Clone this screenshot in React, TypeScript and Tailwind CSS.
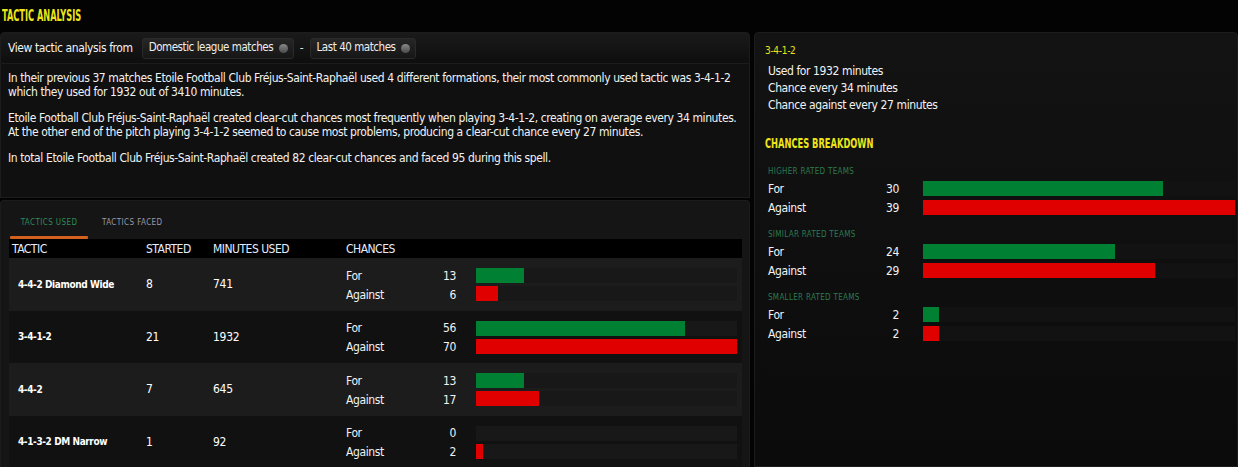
type Chance = { for: number; against: number };

type TacticRow = {
	name: string;
	started: number;
	minutes: number;
	chances: Chance;
};

const tactics: TacticRow[] = [
	{ name: "4-4-2 Diamond Wide", started: 8, minutes: 741, chances: { for: 13, against: 6 } },
	{ name: "3-4-1-2", started: 21, minutes: 1932, chances: { for: 56, against: 70 } },
	{ name: "4-4-2", started: 7, minutes: 645, chances: { for: 13, against: 17 } },
	{ name: "4-1-3-2 DM Narrow", started: 1, minutes: 92, chances: { for: 0, against: 2 } },
];

const breakdown = [
	{ label: "Higher rated teams", chances: { for: 30, against: 39 } },
	{ label: "Similar rated teams", chances: { for: 24, against: 29 } },
	{ label: "Smaller rated teams", chances: { for: 2, against: 2 } },
];

const TABLE_MAX = 70;
const TABLE_BAR = 261;
const SIDE_MAX = 39;
const SIDE_BAR = 312;

const Bar = ({ value, max, width, color, track }: { value: number; max: number; width: number; color: string; track: string }) => (
	<div className={`h-[15px] ${track}`} style={{ width }}>
		<div className={`h-full ${color}`} style={{ width: Math.round((value / max) * width) }} />
	</div>
);

const Dropdown = ({ label, width }: { label: string; width: number }) => (
	<div
		className="flex h-[21px] items-center justify-between rounded-[3px] border border-[#2a2a2a] bg-gradient-to-b from-[#262626] to-[#161616] pr-[5px] pl-[6px] text-[11.5px] tracking-[-0.45px] whitespace-nowrap text-[#eeeeee]"
		style={{ width }}
	>
		<span>{label}</span>
		<span className="h-[9px] w-[9px] rounded-full bg-gradient-to-b from-[#8a8a8a] to-[#4a4a4a]" />
	</div>
);

const ChanceLines = ({ chances }: { chances: Chance }) => (
	<div className="flex flex-col gap-[3px]">
		{(["for", "against"] as const).map((k) => (
			<div key={k} className="flex h-[15px] items-center text-[12px] tracking-[-0.4px] text-[#f2f2f2]">
				<span className={`w-[80px] ${k === "for" ? "" : "translate-y-[1px]"}`}>{k === "for" ? "For" : "Against"}</span>
				<span className={`w-[30px] text-right ${k === "for" ? "" : "translate-y-[1px]"}`}>{chances[k]}</span>
				<span className="w-[20px]" />
				<Bar
					value={chances[k]}
					max={TABLE_MAX}
					width={TABLE_BAR}
					track="bg-[#181818]"
					color={k === "for" ? "bg-[#008033]" : "bg-[#e00000]"}
				/>
			</div>
		))}
	</div>
);

export default function App() {
	return (
		<div className="h-[467px] w-[1238px] overflow-hidden bg-[#030303] font-['DejaVu_Sans_Condensed','DejaVu_Sans',sans-serif] text-white">
			<div className="flex h-[32px] items-center pl-[2px]">
				<span className="inline-block origin-left scale-x-[0.61] text-[15px] font-bold whitespace-nowrap text-[#ece51a] uppercase">
					Tactic Analysis
				</span>
			</div>
			<div className="flex gap-[4px]">
				{/* left column */}
				<div className="flex w-[750px] flex-col">
					<div className="flex h-[32px] items-center gap-[6px] rounded-t-[4px] border border-[#1c1c1c] bg-gradient-to-b from-[#1a1a1a] to-[#0e0e0e] pl-[7px]">
						<span className="mr-[3px] text-[12px] tracking-[-0.4px] whitespace-nowrap text-[#f2f2f2]">View tactic analysis from</span>
						<Dropdown label="Domestic league matches" width={152} />
						<span className="text-[12px] text-[#dddddd]">-</span>
						<Dropdown label="Last 40 matches" width={106} />
					</div>
					<div className="h-[134px] border-x border-b border-[#1c1c1c] bg-[#101010] px-[7px] pt-[8px] text-[12px] leading-[13.5px] tracking-[-0.4px] whitespace-nowrap text-[#f2f2f2]">
						<p>
							In their previous 37 matches Etoile Football Club Fréjus-Saint-Raphaël used 4 different formations, their most commonly used tactic was 3-4-1-2
							<br />
							which they used for 1932 out of 3410 minutes.
						</p>
						<p className="mt-[13px]">
							Etoile Football Club Fréjus-Saint-Raphaël created clear-cut chances most frequently when playing 3-4-1-2, creating on average every 34 minutes.
							<br />
							At the other end of the pitch playing 3-4-1-2 seemed to cause most problems, producing a clear-cut chance every 27 minutes.
						</p>
						<p className="mt-[13px]">
							In total Etoile Football Club Fréjus-Saint-Raphaël created 82 clear-cut chances and faced 95 during this spell.
						</p>
					</div>
					<div className="mt-[2px] h-[268px] rounded-t-[4px] border-x border-t border-[#1c1c1c] bg-[#151515] pl-[8px] pr-[7px]">
						<div className="flex h-[38px] items-end">
							<div className="flex w-[80px] flex-col items-center">
								<span className="pb-[7px] text-[8px] tracking-[0.4px] text-[#2f8a5c] uppercase">Tactics used</span>
								<span className="h-[3px] w-[78px] rounded-[1px] bg-[#d2601e]" />
							</div>
							<span className="ml-[13px] pb-[10px] text-[8px] tracking-[0.4px] text-[#9a9aa8] uppercase">Tactics faced</span>
						</div>
						<div className="grid h-[19px] grid-cols-[137px_67px_133px_1fr] items-center bg-black text-[12px] tracking-[-0.5px] text-[#e6ecff] uppercase">
							<span className="pl-[3px]">Tactic</span>
							<span>Started</span>
							<span>Minutes used</span>
							<span>Chances</span>
						</div>
						{tactics.map((t, i) => (
							<div
								key={t.name}
								className={`grid h-[52.5px] grid-cols-[137px_67px_133px_1fr] items-center text-[12px] tracking-[-0.3px] ${i % 2 === 0 ? "bg-[#1c1c1c]" : "bg-[#111111]"}`}
							>
								<span className="pl-[9px] text-[10px] font-bold tracking-[-0.4px]">{t.name}</span>
								<span>{t.started}</span>
								<span>{t.minutes}</span>
								<div className="pt-[1px]">
									<ChanceLines chances={t.chances} />
								</div>
							</div>
						))}
					</div>
				</div>

				{/* right column */}
				<div className="h-[435px] flex-1 rounded-t-[4px] border border-[#1c1c1c] bg-gradient-to-b from-[#131313] to-[#0b0b0b] pl-[10px]">
					<div className="pt-[10px] text-[10px] tracking-[-0.3px] text-[#e3e31a]">3-4-1-2</div>
					<div className="mt-[7px] flex flex-col gap-[4px] pl-[3px] text-[12px] leading-[13px] tracking-[-0.4px] text-[#f2f2f2]">
						<span>Used for 1932 minutes</span>
						<span>Chance every 34 minutes</span>
						<span>Chance against every 27 minutes</span>
					</div>
					<div className="mt-[19px]">
						<span className="inline-block origin-left scale-x-[0.66] text-[14px] font-bold whitespace-nowrap text-[#ece51a] uppercase">
							Chances breakdown
						</span>
					</div>
					<div className="mt-[11px] flex flex-col gap-[14px] pl-[3px]">
						{breakdown.map((g) => (
							<div key={g.label}>
								<div className="text-[8px] tracking-[0.3px] text-[#2c7a52] uppercase">{g.label}</div>
								<div className="mt-[3px] flex flex-col gap-[4px]">
									{(["for", "against"] as const).map((k) => (
										<div key={k} className="flex h-[15px] items-center text-[12px] tracking-[-0.4px] text-[#f2f2f2]">
											<span className="w-[101px]">{k === "for" ? "For" : "Against"}</span>
											<span className="w-[30px] text-right">{g.chances[k]}</span>
											<span className="w-[24px]" />
											<Bar
												value={g.chances[k]}
												max={SIDE_MAX}
												width={SIDE_BAR}
												track="bg-[#121212]"
												color={k === "for" ? "bg-[#008033]" : "bg-[#e00000]"}
											/>
										</div>
									))}
								</div>
							</div>
						))}
					</div>
				</div>
			</div>
		</div>
	);
}
